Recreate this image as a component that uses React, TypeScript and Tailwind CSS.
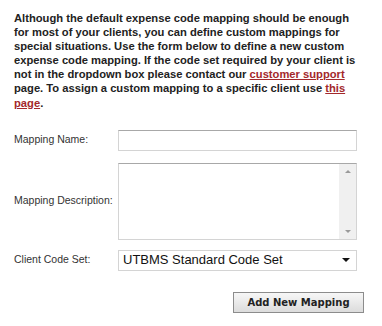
export default function App() {
  return (
    <div className="w-[382px] h-[326px] bg-white pt-[11px] pl-[14px] font-['Liberation_Sans',Arial,sans-serif]">
      {/* Intro text */}
      <p className="w-[352px] text-[11.2px] leading-[14.1px] font-bold text-[#222]">
        Although the default expense code mapping should be enough for most of your clients, you can define custom
        mappings for special situations. Use the form below to define a new custom expense code mapping. If the code
        set required by your client is not in the dropdown box please contact our{" "}
        <a href="#" className="text-[#a3282b] underline">customer support</a> page. To assign a custom mapping to a
        specific client use <a href="#" className="text-[#a3282b] underline">this page</a>.
      </p>

      {/* Form */}
      <div className="mt-[20px] grid grid-cols-[104px_239px] items-center text-[10.5px] text-[#333]">
        <label>Mapping Name:</label>
        <input
          type="text"
          className="h-[21px] border border-[#d4d4d4] border-t-[#a8a8a8] bg-white outline-none"
        />

        <label className="mt-[12px]">Mapping Description:</label>
        <div className="mt-[12px] h-[77px] flex border border-[#d4d4d4] border-t-[#a8a8a8] bg-white">
          <div className="flex-1" />
          <div className="w-[17px] bg-[#f0f0f0] flex flex-col items-center justify-between py-[6px]">
            <div className="w-0 h-0 border-l-[3px] border-r-[3px] border-b-[3px] border-l-transparent border-r-transparent border-b-[#9a9a9a]" />
            <div className="w-0 h-0 border-l-[3px] border-r-[3px] border-t-[3px] border-l-transparent border-r-transparent border-t-[#9a9a9a]" />
          </div>
        </div>

        <label className="mt-[10px]">Client Code Set:</label>
        <div className="mt-[10px] h-[21px] flex items-center justify-between border border-[#d4d4d4] bg-white pl-[4px] pr-[6px]">
          <span className="text-[13px] text-[#111]">UTBMS Standard Code Set</span>
          <div className="w-0 h-0 border-l-[4px] border-r-[4px] border-t-[4px] border-l-transparent border-r-transparent border-t-[#111]" />
        </div>
      </div>

      <div className="mt-[21px] w-[350px] flex justify-end">
        <button className="w-[131px] h-[21px] border border-[#8c8c8c] bg-gradient-to-b from-[#f7f7f7] to-[#dcdcdc] text-[10px] font-bold text-[#222] font-['DejaVu_Sans',Verdana,sans-serif]">
          Add New Mapping
        </button>
      </div>
    </div>
  );
}
